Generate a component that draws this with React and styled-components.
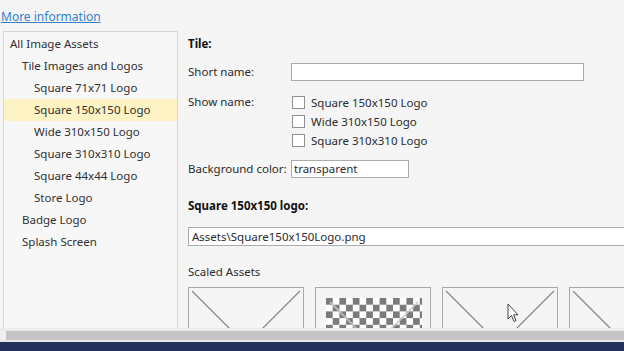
import React from "react"
import styled, { createGlobalStyle } from "styled-components"

const GlobalStyle = createGlobalStyle`
    html, body {
        margin: 0;
        padding: 0;
        background: #f5f5f5;
    }
    body {
        font-family: "Noto Sans", "Open Sans", sans-serif;
        font-size: 11.5px;
        color: #2b2b2b;
    }
`

const PAGE = styled.div`
    position: relative;
    width: 624px;
    height: 351px;
    display: flex;
    flex-direction: column;
    overflow: hidden;
    background: #f5f5f5;
`

const LINKROW = styled.div`
    height: 31px;
    display: flex;
    align-items: flex-start;
    padding: 8px 0 0 1px;
    box-sizing: border-box;
`

const LINK = styled.a`
    color: #3280cc;
    text-decoration: underline;
    font-size: 12px;
    line-height: 17px;
    cursor: pointer;
`

const MAIN = styled.div`
    flex: 1;
    display: flex;
    min-height: 0;
`

const TREE = styled.div`
    margin-left: 3px;
    width: 173px;
    padding-top: 1px;
    border: 1px solid #d6d6d6;
    border-bottom: none;
    background: #f7f7f7;
    display: flex;
    flex-direction: column;
`

const NODE = styled.div`
    height: 22px;
    line-height: 22px;
    padding-left: ${p => 6 + p.level * 12}px;
    background: ${p => p.selected ? "#fdf3c4" : "transparent"};
    white-space: nowrap;
    color: #303030;
`

const CONTENT = styled.div`
    flex: 1;
    padding: 5px 0 0 10px;
    display: flex;
    flex-direction: column;
    overflow: hidden;
    min-width: 0;
`

const HEADING = styled.div`
    font-weight: bold;
    height: 16px;
    line-height: 16px;
    color: #111;
    margin-top: ${p => p.top || 0}px;
`

const FORMROW = styled.div`
    display: grid;
    grid-template-columns: 103px 1fr;
    margin-top: ${p => p.top || 0}px;
`

const LABEL = styled.div`
    line-height: 18px;
`

const INPUT = styled.div`
    width: ${p => p.width}px;
    height: 18px;
    box-sizing: border-box;
    border: 1px solid #ababab;
    background: #fff;
    line-height: 16px;
    padding-left: 2px;
    white-space: nowrap;
`

const CHECKLIST = styled.div`
    display: flex;
    flex-direction: column;
`

const CHECKROW = styled.div`
    height: 19px;
    display: flex;
    align-items: center;
    gap: 6px;
    padding-left: 1px;
`

const BOX = styled.span`
    width: 13px;
    height: 13px;
    box-sizing: border-box;
    border: 1px solid #8f8f8f;
    background: #fff;
`

const PATHINPUT = styled.div`
    margin-top: 13px;
    height: 19px;
    box-sizing: border-box;
    border: 1px solid #ababab;
    border-right: none;
    background: #fff;
    line-height: 17px;
    padding-left: 3px;
    white-space: nowrap;
`

const SUBTITLE = styled.div`
    margin-top: 18px;
    height: 16px;
    line-height: 16px;
`

const ASSETS = styled.div`
    margin-top: 7px;
    display: flex;
    gap: 11px;
`

const ASSET = styled.div`
    flex: 0 0 auto;
    width: 116px;
    height: 116px;
    box-sizing: border-box;
    border: 1px solid #a9a9a9;
`

const SCROLLBAR = styled.div`
    height: 14px;
    box-sizing: border-box;
    border-top: 3px solid #ebebeb;
    border-bottom: 2px solid #e9e9e9;
    background: #f0f0f0;
    display: flex;
`

const THUMB = styled.div`
    margin-left: 6px;
    flex: 1;
    background: #c4c4c7;
`

const TASKBAR = styled.div`
    height: 9px;
    background: #23315a;
`

const POINTER = styled.svg`
    position: absolute;
    left: 507px;
    top: 303px;
`

function Placeholder () {
    return (
        <svg width="114" height="114" style={{ display: "block" }}>
            <line x1="3" y1="3" x2="111" y2="111" stroke="#8a8a8a" strokeWidth="1.3" />
            <line x1="111" y1="3" x2="3" y2="111" stroke="#8a8a8a" strokeWidth="1.3" />
        </svg>
    )
}

function Checker () {
    return (
        <svg width="114" height="114" style={{ display: "block" }}>
            <defs>
                <pattern id="chk" x="10" y="10" width="13.4" height="13.4" patternUnits="userSpaceOnUse">
                    <rect width="13.4" height="13.4" fill="#fff" />
                    <rect width="6.7" height="6.7" fill="#7b7b7b" />
                    <rect x="6.7" y="6.7" width="6.7" height="6.7" fill="#7b7b7b" />
                </pattern>
            </defs>
            <rect x="10" y="10" width="96" height="96" fill="url(#chk)" />
            <line x1="14" y1="14" x2="102" y2="102" stroke="#c8c8c8" strokeWidth="2" opacity="0.8" />
            <line x1="102" y1="14" x2="14" y2="102" stroke="#c8c8c8" strokeWidth="2" opacity="0.8" />
        </svg>
    )
}

const tree = [
    { label: "All Image Assets", level: 0 },
    { label: "Tile Images and Logos", level: 1 },
    { label: "Square 71x71 Logo", level: 2 },
    { label: "Square 150x150 Logo", level: 2, selected: true },
    { label: "Wide 310x150 Logo", level: 2 },
    { label: "Square 310x310 Logo", level: 2 },
    { label: "Square 44x44 Logo", level: 2 },
    { label: "Store Logo", level: 2 },
    { label: "Badge Logo", level: 1 },
    { label: "Splash Screen", level: 1 },
]

const showNames = ["Square 150x150 Logo", "Wide 310x150 Logo", "Square 310x310 Logo"]

export default function App () {
    return (
        <PAGE>
            <GlobalStyle />
            <LINKROW>
                <LINK>More information</LINK>
            </LINKROW>
            <MAIN>
                <TREE>
                    {tree.map((node, index) => (
                        <NODE key={index} level={node.level} selected={node.selected}>
                            {node.label}
                        </NODE>
                    ))}
                </TREE>
                <CONTENT>
                    <HEADING>Tile:</HEADING>
                    <FORMROW top={11}>
                        <LABEL>Short name:</LABEL>
                        <INPUT width={293} />
                    </FORMROW>
                    <FORMROW top={12}>
                        <LABEL>Show name:</LABEL>
                        <CHECKLIST>
                            {showNames.map((name, index) => (
                                <CHECKROW key={index}>
                                    <BOX />
                                    {name}
                                </CHECKROW>
                            ))}
                        </CHECKLIST>
                    </FORMROW>
                    <FORMROW top={10}>
                        <LABEL>Background color:</LABEL>
                        <INPUT width={118}>transparent</INPUT>
                    </FORMROW>
                    <HEADING top={20}>Square 150x150 logo:</HEADING>
                    <PATHINPUT>Assets\Square150x150Logo.png</PATHINPUT>
                    <SUBTITLE>Scaled Assets</SUBTITLE>
                    <ASSETS>
                        <ASSET><Placeholder /></ASSET>
                        <ASSET><Checker /></ASSET>
                        <ASSET><Placeholder /></ASSET>
                        <ASSET><Placeholder /></ASSET>
                    </ASSETS>
                </CONTENT>
            </MAIN>
            <SCROLLBAR>
                <THUMB />
            </SCROLLBAR>
            <TASKBAR />
            <POINTER width="12" height="20" viewBox="0 0 12 20">
                <path d="M1 1 L1 16 L4.5 12.5 L7 18.5 L9 17.6 L6.6 11.8 L11 11.8 Z" fill="#fff" stroke="#444" strokeWidth="1" strokeLinejoin="round" />
            </POINTER>
        </PAGE>
    )
}
